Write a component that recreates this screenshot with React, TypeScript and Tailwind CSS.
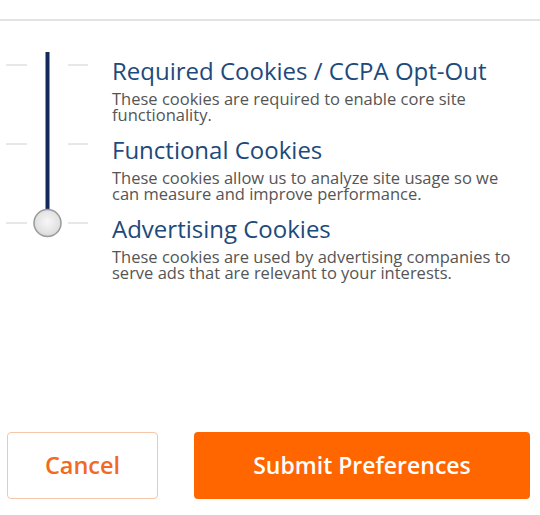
import React from 'react'

const sections = [
  {
    title: 'Required Cookies / CCPA Opt-Out',
    text: 'These cookies are required to enable core site functionality.',
  },
  {
    title: 'Functional Cookies',
    text: 'These cookies allow us to analyze site usage so we can measure and improve performance.',
  },
  {
    title: 'Advertising Cookies',
    text: 'These cookies are used by advertising companies to serve ads that are relevant to your interests.',
  },
]

function Slider() {
  const ticks = [13, 92, 171]
  return (
    <svg width="112" height="200" viewBox="0 0 112 200">
      <defs>
        <radialGradient id="knob" cx="50%" cy="45%" r="60%">
          <stop offset="0%" stopColor="#f7f7f7" />
          <stop offset="70%" stopColor="#e2e2e2" />
          <stop offset="100%" stopColor="#cfcfcf" />
        </radialGradient>
      </defs>
      {ticks.map((y) => (
        <g key={y}>
          <line x1="6" y1={y} x2="27" y2={y} stroke="#d0d0d0" strokeWidth="1" />
          <line x1="68" y1={y} x2="88" y2={y} stroke="#d0d0d0" strokeWidth="1" />
        </g>
      ))}
      <line x1="47.5" y1="0" x2="47.5" y2="160" stroke="#12295a" strokeWidth="4" />
      <circle cx="47.5" cy="171" r="13.5" fill="url(#knob)" stroke="#9a9a9a" strokeWidth="1.5" />
    </svg>
  )
}

export default function App() {
  return (
    <div className="w-[540px] h-[515px] bg-white flex flex-col font-['Open_Sans',sans-serif]">
      {/* Top rule */}
      <div className="h-[21px] border-b-2 border-[#e3e3e3] shrink-0" />

      {/* Slider + categories */}
      <div className="flex mt-[31px]">
        <div className="w-[112px] shrink-0">
          <Slider />
        </div>
        <div className="flex flex-col gap-[13px] pt-[5px] w-[410px]">
          {sections.map((s) => (
            <div key={s.title} className="flex flex-col gap-[6px]">
              <h2 className="text-[24px] leading-[28px] text-[#1d4a7a] font-normal">{s.title}</h2>
              <p className="text-[16.5px] leading-[16px] text-[#555555]">{s.text}</p>
            </div>
          ))}
        </div>
      </div>

      <div className="flex-1" />

      {/* Buttons */}
      <div className="flex gap-[36px] pl-[7px] pr-[10px] pb-[16px]">
        <button className="w-[151px] h-[67px] rounded-[4px] border border-[#f6c6a8] bg-white text-[#f26a1f] text-[23.5px] font-semibold">
          Cancel
        </button>
        <button className="flex-1 h-[67px] rounded-[4px] bg-[#ff6600] text-white text-[23px] font-semibold">
          Submit Preferences
        </button>
      </div>
    </div>
  )
}
